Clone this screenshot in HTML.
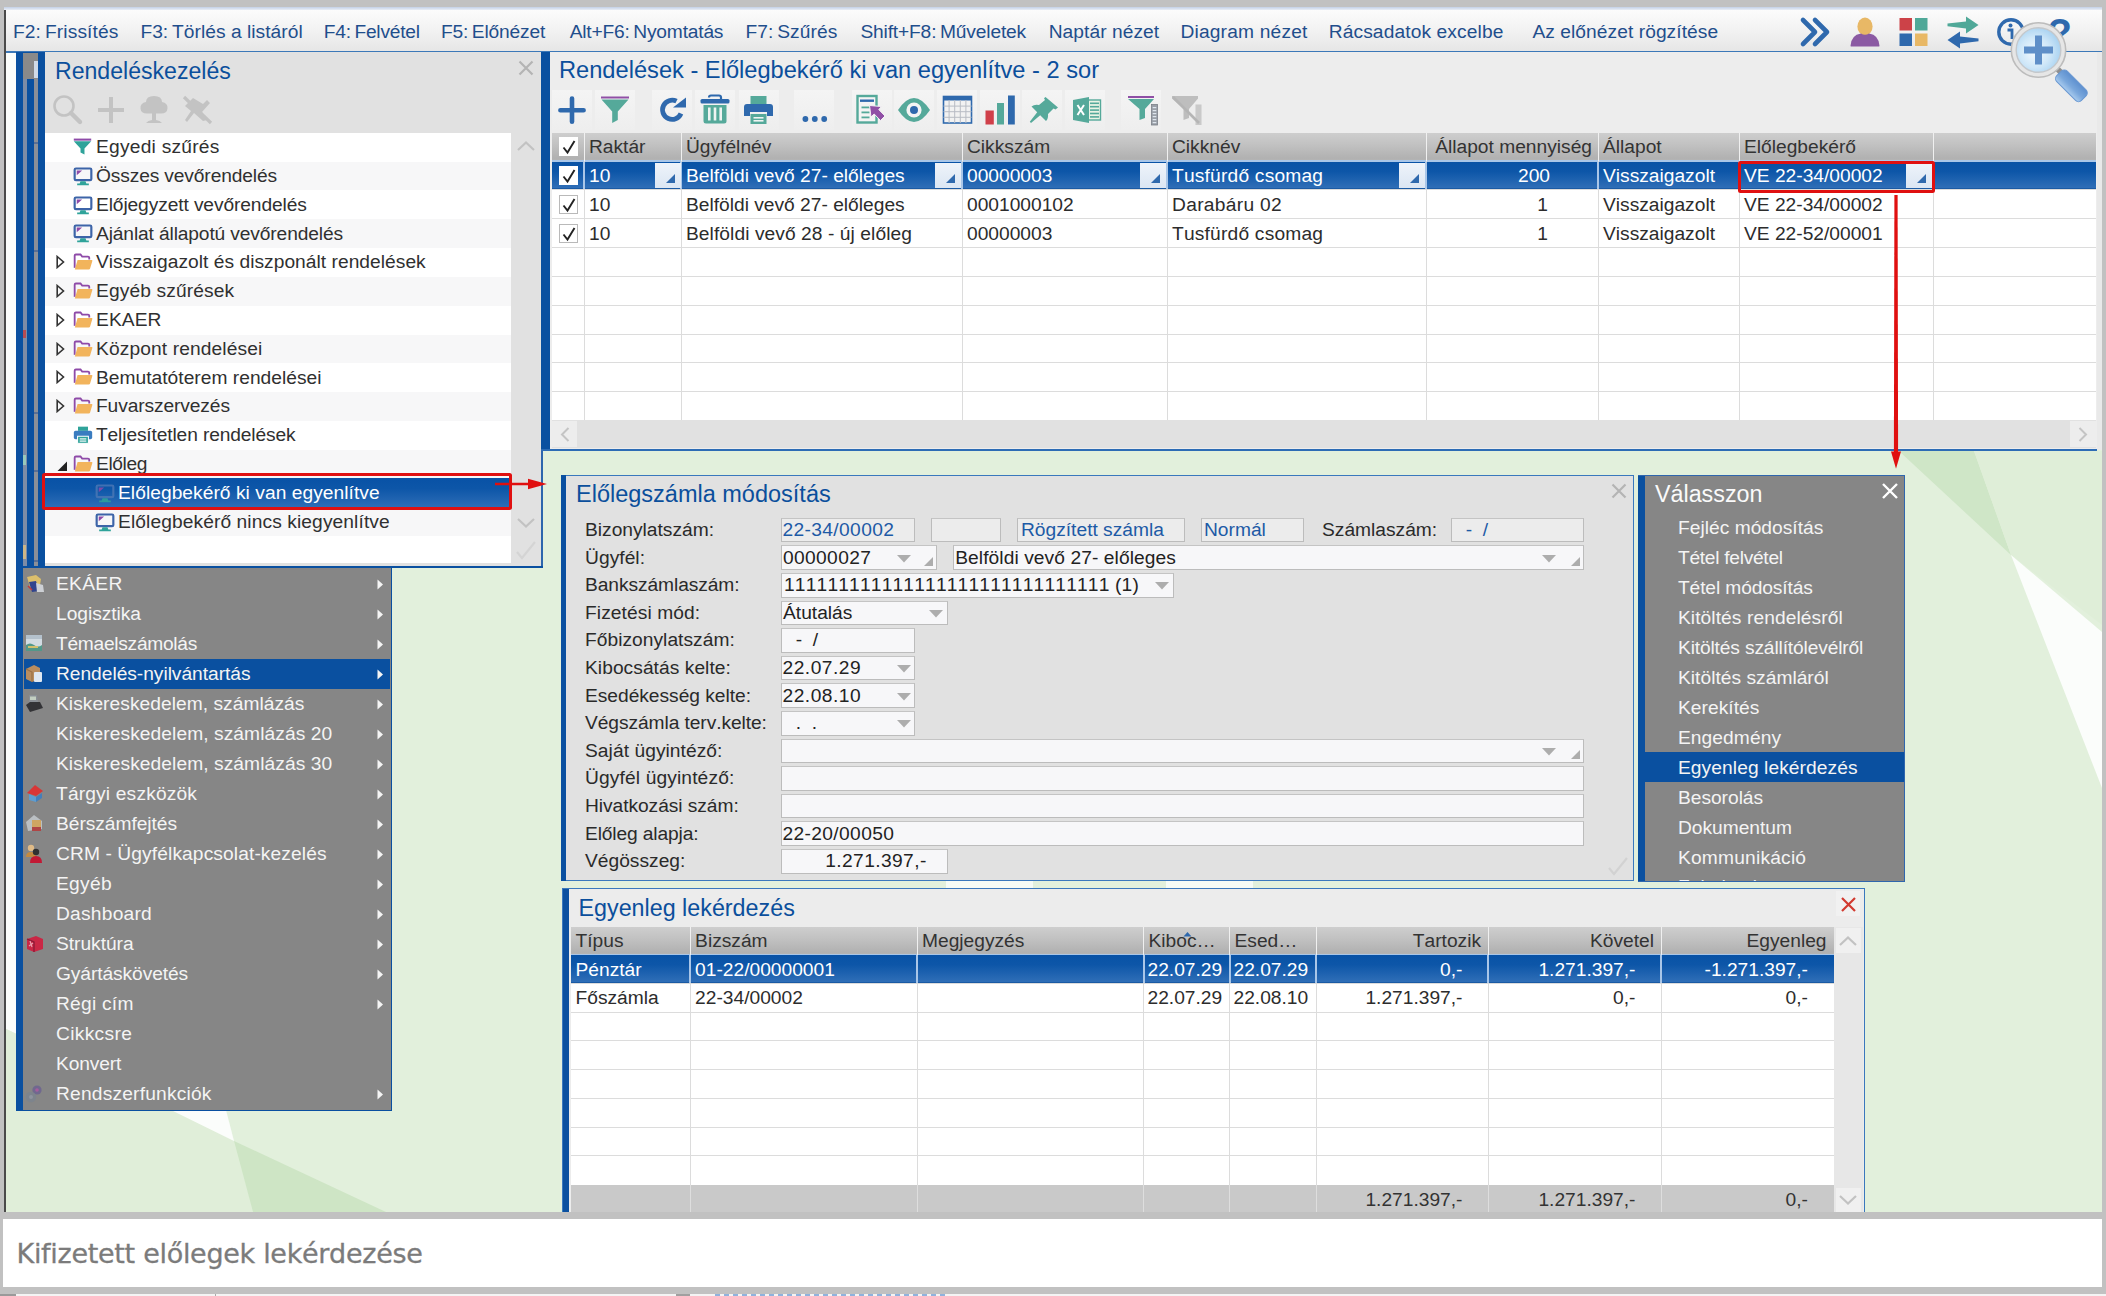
<!DOCTYPE html><html lang="hu"><head><meta charset="utf-8"><title>Kifizetett előlegek lekérdezése</title><style>
html,body{margin:0;padding:0}
body{font-kerning:none;font-variant-ligatures:none;width:2106px;height:1296px;position:relative;overflow:hidden;background:#c1c1c1;font-family:"Liberation Sans",Arial,sans-serif;}
div,svg{position:absolute;box-sizing:border-box}
.t{white-space:nowrap;overflow:visible}
.clip{overflow:hidden}
</style></head><body>
<div class="clip" style="left:4px;top:7px;width:2098px;height:1205px;background:#e2f0dc">
<div style="left:-4px;top:-7px;width:2106px;height:1296px">
<svg style="left:0;top:0" width="2106" height="1296" viewBox="0 0 2106 1296"><polygon points="1899,451 1974,451 2011,555" fill="#cfe6c7"/><polygon points="1974,451 2102,451 2102,625 2011,555" fill="#dfeed8"/><polygon points="2011,555 2102,632 2102,788" fill="#fbfdfb"/><polygon points="4,52 17,52 17,1034 4,1028" fill="#fbfdfb"/><polygon points="4,1028 171,1110 234,1141 253,1212 4,1212" fill="#e0eed9"/><polygon points="171,1110 226,1110 234,1141" fill="#fbfdfb"/><polygon points="234,1141 253,1212 386,1212" fill="#cee5c5"/><rect x="946" y="880" width="87" height="10" fill="#f6fbf6"/><rect x="1166" y="880" width="87" height="10" fill="#f6fbf6"/></svg>
<div style="left:4px;top:7px;width:1.5px;height:1205px;background:#4a4a4a"></div>
<div style="left:4px;top:7px;width:2098px;height:3px;background:linear-gradient(#c3d0e6,#e9eef6)"></div>
<div style="left:5.5px;top:10px;width:2096.5px;height:41px;background:linear-gradient(#fcfcfc,#f1f1f1 55%,#e6e6e6)"></div>
<div style="left:5.5px;top:50.5px;width:2096.5px;height:2px;background:#3c78b8"></div>
<div class="t" style="left:13px;top:19.0px;height:25px;line-height:25px;font-size:19.2px;color:#1f4e8c;letter-spacing:0.108px;">F2: Frissítés</div>
<div class="t" style="left:140.4px;top:19.0px;height:25px;line-height:25px;font-size:19.2px;color:#1f4e8c;letter-spacing:0.030px;">F3: Törlés a listáról</div>
<div class="t" style="left:323.7px;top:19.0px;height:25px;line-height:25px;font-size:19.2px;color:#1f4e8c;letter-spacing:-0.218px;">F4: Felvétel</div>
<div class="t" style="left:441px;top:19.0px;height:25px;line-height:25px;font-size:19.2px;color:#1f4e8c;letter-spacing:-0.182px;">F5: Előnézet</div>
<div class="t" style="left:569.7px;top:19.0px;height:25px;line-height:25px;font-size:19.2px;color:#1f4e8c;letter-spacing:-0.194px;">Alt+F6: Nyomtatás</div>
<div class="t" style="left:745.4px;top:19.0px;height:25px;line-height:25px;font-size:19.2px;color:#1f4e8c;letter-spacing:0.067px;">F7: Szűrés</div>
<div class="t" style="left:860.4px;top:19.0px;height:25px;line-height:25px;font-size:19.2px;color:#1f4e8c;letter-spacing:-0.156px;">Shift+F8: Műveletek</div>
<div class="t" style="left:1048.7px;top:19.0px;height:25px;line-height:25px;font-size:19.2px;color:#1f4e8c;letter-spacing:0.055px;">Naptár nézet</div>
<div class="t" style="left:1180.4px;top:19.0px;height:25px;line-height:25px;font-size:19.2px;color:#1f4e8c;letter-spacing:0.183px;">Diagram nézet</div>
<div class="t" style="left:1328.7px;top:19.0px;height:25px;line-height:25px;font-size:19.2px;color:#1f4e8c;letter-spacing:0.112px;">Rácsadatok excelbe</div>
<div class="t" style="left:1532.4px;top:19.0px;height:25px;line-height:25px;font-size:19.2px;color:#1f4e8c;letter-spacing:0.060px;">Az előnézet rögzítése</div>
<svg style="left:1798px;top:16px;" width="34" height="32" viewBox="0 0 34 32"><path d="M5 4 L17 16 L5 28 M17 4 L29 16 L17 28" fill="none" stroke="#2f69ad" stroke-width="4.6" stroke-linecap="round" stroke-linejoin="round"/></svg>
<svg style="left:1848px;top:16px;" width="34" height="32" viewBox="0 0 34 32"><ellipse cx="17" cy="10.5" rx="7.6" ry="9" fill="#e8b866"/><path d="M2.5 30 Q3 19 13 17.5 Q17 20 21 17.5 Q31 19 31.5 30 Q31.5 30.5 30 30.5 H4 Q2.5 30.5 2.5 30 Z" fill="#8b5aa3"/></svg>
<svg style="left:1898px;top:16px;" width="32" height="32" viewBox="0 0 32 32"><rect x="1.5" y="2" width="12.5" height="12.5" fill="#cc4248"/><rect x="17" y="2" width="12.5" height="12.5" fill="#4fa898"/><rect x="1.5" y="17.5" width="12.5" height="12.5" fill="#2f69ad"/><rect x="17" y="17.5" width="12.5" height="12.5" fill="#e8b866"/></svg>
<svg style="left:1945px;top:15px;" width="36" height="34" viewBox="0 0 36 34"><path d="M2.5 8.6 L21 6.4 V1.5 L33.5 10 L21 18.5 V13.6 L2.5 11.2 Z" fill="#4fa898"/><path d="M33.5 23.4 L15 21.4 V16.5 L2.5 25 L15 33.5 V28.6 L33.5 26.2 Z" fill="#2f69ad"/></svg>
<svg style="left:1995px;top:16px;" width="32" height="32" viewBox="0 0 32 32"><circle cx="16" cy="16" r="12.2" fill="none" stroke="#2f69ad" stroke-width="3.4"/><circle cx="15.5" cy="9.5" r="2" fill="#2f69ad"/><path d="M12.5 14 H17 V23" fill="none" stroke="#2f69ad" stroke-width="2.8"/></svg>
<div class="t" style="left:2047.5px;top:12.0px;height:42px;line-height:42px;font-size:40px;color:#2f69ad;font-weight:bold;">?</div>
<div style="left:16px;top:52px;width:526.5px;height:516px;background:#e1e1e1"></div>
<div style="left:16px;top:52px;width:29px;height:516px;background:#0a50a0"></div>
<div style="left:23px;top:53px;width:15px;height:26px;background:#8a8a8a"></div>
<div style="left:34px;top:61px;width:4px;height:17px;background:#d0dbe8"></div>
<div style="left:23.2px;top:79px;width:3.8px;height:487px;background:#7d8ca6"></div>
<div style="left:33.5px;top:79px;width:4.3px;height:487px;background:#8a8f98"></div>
<div style="left:33.5px;top:142px;width:4.3px;height:2px;background:#5a6f94"></div>
<div style="left:33.5px;top:250px;width:4.3px;height:2px;background:#5a6f94"></div>
<div style="left:33.5px;top:412px;width:4.3px;height:2px;background:#5a6f94"></div>
<div style="left:33.5px;top:470px;width:4.3px;height:2px;background:#5a6f94"></div>
<div style="left:33.5px;top:560px;width:4.3px;height:2px;background:#5a6f94"></div>
<div style="left:22.5px;top:330px;width:3px;height:8px;background:#d03030;opacity:.7"></div>
<div style="left:22.5px;top:455px;width:3px;height:10px;background:#9fd8c0;opacity:.8"></div>
<div style="left:22.5px;top:545px;width:3px;height:14px;background:#e0c080;opacity:.8"></div>
<div style="left:44px;top:565.6px;width:498.5px;height:2.4px;background:#0a50a0"></div>
<div style="left:541.2px;top:450px;width:1.5px;height:116px;background:#2d66ad"></div>
<div class="t" style="left:55px;top:55.599999999999994px;height:30px;line-height:30px;font-size:23.1px;color:#0b4f9c;">Rendeléskezelés</div>
<svg style="left:517px;top:59px;" width="18" height="18" viewBox="0 0 18 18"><path d="M2.5 2.5 L15.5 15.5 M15.5 2.5 L2.5 15.5" stroke="#b4b4b4" stroke-width="2.2" fill="none"/></svg>
<svg style="left:52px;top:94px;" width="32" height="32" viewBox="0 0 32 32"><circle cx="12" cy="12" r="9.5" fill="none" stroke="#c3c3c3" stroke-width="2.6"/><path d="M19 19 L28 28" stroke="#c3c3c3" stroke-width="4.4" stroke-linecap="round"/></svg>
<svg style="left:96px;top:95px;" width="30" height="30" viewBox="0 0 30 30"><path d="M15 2 V28 M2 15 H28" stroke="#c3c3c3" stroke-width="4"/></svg>
<svg style="left:138px;top:94px;" width="32" height="32" viewBox="0 0 32 32"><path d="M16 2 Q24 2 24 8 Q30 9 29.5 14.5 Q29 20 22 19.5 H10 Q3 20 2.5 14.5 Q2 9 8 8 Q8 2 16 2 Z" fill="#c3c3c3"/><path d="M14 19 H18 V26 Q22 26.5 24 29 H8 Q10 26.5 14 26 Z" fill="#c3c3c3"/></svg>
<svg style="left:181px;top:94px;" width="34" height="32" viewBox="0 0 34 32"><path d="M3 3 L30 29" stroke="#c3c3c3" stroke-width="3.2"/><path d="M12 4 L22 10 L26 6 L29 9 L21 18 L26 26 L22 27 L13 19 L6 28 L4 26 L10 17 L4 12 Z" fill="#c3c3c3"/></svg>
<div style="left:45px;top:133px;width:466px;height:430.3px;background:#fff"></div>
<svg style="left:73px;top:137.41px;" width="19" height="19" viewBox="0 0 24 24"><rect x="1" y="2" width="22" height="2.6" fill="#8e4aa8"/><path d="M1 5.5 H23 L14.5 14.5 V22 L9.5 19.5 V14.5 Z" fill="#2fa39a"/></svg>
<div class="t" style="left:96px;top:134.10999999999999px;height:25px;line-height:25px;font-size:19.2px;color:#303030;letter-spacing:0.233px;">Egyedi szűrés</div>
<div style="left:45px;top:161.62px;width:466px;height:28.82px;background:#f7f7f8"></div>
<svg style="left:73px;top:165.73px;" width="20" height="20" viewBox="0 0 24 24"><rect x="2" y="3" width="20" height="14" rx="1.5" fill="none" stroke="#3d64a8" stroke-width="2.6"/><path d="M4.5 5.5 H11 L4.5 11 Z" fill="#8e4aa8"/><path d="M9 18.3 H15 L16 21 H19 V23 H5 V21 H8 Z" fill="#2fa39a"/></svg>
<div class="t" style="left:96px;top:162.92999999999998px;height:25px;line-height:25px;font-size:19.2px;color:#303030;letter-spacing:-0.133px;">Összes vevőrendelés</div>
<svg style="left:73px;top:194.54999999999998px;" width="20" height="20" viewBox="0 0 24 24"><rect x="2" y="3" width="20" height="14" rx="1.5" fill="none" stroke="#3d64a8" stroke-width="2.6"/><path d="M4.5 5.5 H11 L4.5 11 Z" fill="#8e4aa8"/><path d="M9 18.3 H15 L16 21 H19 V23 H5 V21 H8 Z" fill="#2fa39a"/></svg>
<div class="t" style="left:96px;top:191.74999999999997px;height:25px;line-height:25px;font-size:19.2px;color:#303030;letter-spacing:-0.109px;">Előjegyzett vevőrendelés</div>
<div style="left:45px;top:219.26000000000002px;width:466px;height:28.82px;background:#f7f7f8"></div>
<svg style="left:73px;top:223.37px;" width="20" height="20" viewBox="0 0 24 24"><rect x="2" y="3" width="20" height="14" rx="1.5" fill="none" stroke="#3d64a8" stroke-width="2.6"/><path d="M4.5 5.5 H11 L4.5 11 Z" fill="#8e4aa8"/><path d="M9 18.3 H15 L16 21 H19 V23 H5 V21 H8 Z" fill="#2fa39a"/></svg>
<div class="t" style="left:96px;top:220.57px;height:25px;line-height:25px;font-size:19.2px;color:#303030;letter-spacing:-0.129px;">Ajánlat állapotú vevőrendelés</div>
<svg style="left:73px;top:252.19px;" width="20" height="20" viewBox="0 0 24 24"><path d="M2 6 V4.5 Q2 3 3.5 3 H9 L11 5.5 H18 Q19.5 5.5 19.5 7 V9" fill="none" stroke="#8e4aa8" stroke-width="2.2"/><path d="M2 6 V19" stroke="#8e4aa8" stroke-width="2.2"/><path d="M5.5 9.5 H22.5 Q23.6 9.5 23.2 10.8 L20.6 19.6 Q20.2 21 18.8 21 H2.2 Z" fill="#f2b45c"/></svg>
<svg style="left:56px;top:255.19px;" width="9" height="14" viewBox="0 0 9 14"><path d="M1.2 1.5 L7.5 7 L1.2 12.5 Z" fill="none" stroke="#333" stroke-width="1.6"/></svg>
<div class="t" style="left:96px;top:249.39px;height:25px;line-height:25px;font-size:19.2px;color:#303030;letter-spacing:0.032px;">Visszaigazolt és diszponált rendelések</div>
<div style="left:45px;top:276.9px;width:466px;height:28.82px;background:#f7f7f8"></div>
<svg style="left:73px;top:281.01px;" width="20" height="20" viewBox="0 0 24 24"><path d="M2 6 V4.5 Q2 3 3.5 3 H9 L11 5.5 H18 Q19.5 5.5 19.5 7 V9" fill="none" stroke="#8e4aa8" stroke-width="2.2"/><path d="M2 6 V19" stroke="#8e4aa8" stroke-width="2.2"/><path d="M5.5 9.5 H22.5 Q23.6 9.5 23.2 10.8 L20.6 19.6 Q20.2 21 18.8 21 H2.2 Z" fill="#f2b45c"/></svg>
<svg style="left:56px;top:284.01px;" width="9" height="14" viewBox="0 0 9 14"><path d="M1.2 1.5 L7.5 7 L1.2 12.5 Z" fill="none" stroke="#333" stroke-width="1.6"/></svg>
<div class="t" style="left:96px;top:278.21px;height:25px;line-height:25px;font-size:19.2px;color:#303030;letter-spacing:0.131px;">Egyéb szűrések</div>
<svg style="left:73px;top:309.83000000000004px;" width="20" height="20" viewBox="0 0 24 24"><path d="M2 6 V4.5 Q2 3 3.5 3 H9 L11 5.5 H18 Q19.5 5.5 19.5 7 V9" fill="none" stroke="#8e4aa8" stroke-width="2.2"/><path d="M2 6 V19" stroke="#8e4aa8" stroke-width="2.2"/><path d="M5.5 9.5 H22.5 Q23.6 9.5 23.2 10.8 L20.6 19.6 Q20.2 21 18.8 21 H2.2 Z" fill="#f2b45c"/></svg>
<svg style="left:56px;top:312.83000000000004px;" width="9" height="14" viewBox="0 0 9 14"><path d="M1.2 1.5 L7.5 7 L1.2 12.5 Z" fill="none" stroke="#333" stroke-width="1.6"/></svg>
<div class="t" style="left:96px;top:307.03000000000003px;height:25px;line-height:25px;font-size:19.2px;color:#303030;letter-spacing:0.100px;">EKAER</div>
<div style="left:45px;top:334.54px;width:466px;height:28.82px;background:#f7f7f8"></div>
<svg style="left:73px;top:338.65000000000003px;" width="20" height="20" viewBox="0 0 24 24"><path d="M2 6 V4.5 Q2 3 3.5 3 H9 L11 5.5 H18 Q19.5 5.5 19.5 7 V9" fill="none" stroke="#8e4aa8" stroke-width="2.2"/><path d="M2 6 V19" stroke="#8e4aa8" stroke-width="2.2"/><path d="M5.5 9.5 H22.5 Q23.6 9.5 23.2 10.8 L20.6 19.6 Q20.2 21 18.8 21 H2.2 Z" fill="#f2b45c"/></svg>
<svg style="left:56px;top:341.65000000000003px;" width="9" height="14" viewBox="0 0 9 14"><path d="M1.2 1.5 L7.5 7 L1.2 12.5 Z" fill="none" stroke="#333" stroke-width="1.6"/></svg>
<div class="t" style="left:96px;top:335.85px;height:25px;line-height:25px;font-size:19.2px;color:#303030;letter-spacing:0.112px;">Központ rendelései</div>
<svg style="left:73px;top:367.47px;" width="20" height="20" viewBox="0 0 24 24"><path d="M2 6 V4.5 Q2 3 3.5 3 H9 L11 5.5 H18 Q19.5 5.5 19.5 7 V9" fill="none" stroke="#8e4aa8" stroke-width="2.2"/><path d="M2 6 V19" stroke="#8e4aa8" stroke-width="2.2"/><path d="M5.5 9.5 H22.5 Q23.6 9.5 23.2 10.8 L20.6 19.6 Q20.2 21 18.8 21 H2.2 Z" fill="#f2b45c"/></svg>
<svg style="left:56px;top:370.47px;" width="9" height="14" viewBox="0 0 9 14"><path d="M1.2 1.5 L7.5 7 L1.2 12.5 Z" fill="none" stroke="#333" stroke-width="1.6"/></svg>
<div class="t" style="left:96px;top:364.67px;height:25px;line-height:25px;font-size:19.2px;color:#303030;letter-spacing:0.022px;">Bemutatóterem rendelései</div>
<div style="left:45px;top:392.18px;width:466px;height:28.82px;background:#f7f7f8"></div>
<svg style="left:73px;top:396.29px;" width="20" height="20" viewBox="0 0 24 24"><path d="M2 6 V4.5 Q2 3 3.5 3 H9 L11 5.5 H18 Q19.5 5.5 19.5 7 V9" fill="none" stroke="#8e4aa8" stroke-width="2.2"/><path d="M2 6 V19" stroke="#8e4aa8" stroke-width="2.2"/><path d="M5.5 9.5 H22.5 Q23.6 9.5 23.2 10.8 L20.6 19.6 Q20.2 21 18.8 21 H2.2 Z" fill="#f2b45c"/></svg>
<svg style="left:56px;top:399.29px;" width="9" height="14" viewBox="0 0 9 14"><path d="M1.2 1.5 L7.5 7 L1.2 12.5 Z" fill="none" stroke="#333" stroke-width="1.6"/></svg>
<div class="t" style="left:96px;top:393.49px;height:25px;line-height:25px;font-size:19.2px;color:#303030;letter-spacing:-0.108px;">Fuvarszervezés</div>
<svg style="left:73px;top:425.11px;" width="20" height="20" viewBox="0 0 24 24"><rect x="6" y="2" width="12" height="5" fill="#2fa39a"/><rect x="1" y="7" width="22" height="10" rx="2" fill="#3a7cc0"/><rect x="5.5" y="13.5" width="13" height="8.5" fill="#2fa39a" stroke="#fff" stroke-width="1.2"/><rect x="8" y="16" width="8" height="1.4" fill="#fff"/><rect x="8" y="18.6" width="8" height="1.4" fill="#fff"/></svg>
<div class="t" style="left:96px;top:422.31px;height:25px;line-height:25px;font-size:19.2px;color:#303030;letter-spacing:-0.135px;">Teljesítetlen rendelések</div>
<div style="left:45px;top:449.82px;width:466px;height:28.82px;background:#f7f7f8"></div>
<svg style="left:73px;top:453.93px;" width="20" height="20" viewBox="0 0 24 24"><path d="M2 6 V4.5 Q2 3 3.5 3 H9 L11 5.5 H18 Q19.5 5.5 19.5 7 V9" fill="none" stroke="#8e4aa8" stroke-width="2.2"/><path d="M2 6 V19" stroke="#8e4aa8" stroke-width="2.2"/><path d="M5.5 9.5 H22.5 Q23.6 9.5 23.2 10.8 L20.6 19.6 Q20.2 21 18.8 21 H2.2 Z" fill="#f2b45c"/></svg>
<svg style="left:57px;top:460.93px;" width="11" height="11" viewBox="0 0 11 11"><path d="M10 0.5 V10 H0.5 Z" fill="#222"/></svg>
<div class="t" style="left:96px;top:451.13px;height:25px;line-height:25px;font-size:19.2px;color:#303030;letter-spacing:-0.400px;">Előleg</div>
<div style="left:45px;top:478.14000000000004px;width:466px;height:29.82px;background:linear-gradient(#0852a6,#0d56a8 35%,#2f6eb7)"></div>
<svg style="left:95px;top:482.75000000000006px;opacity:.85" width="20" height="20" viewBox="0 0 24 24"><rect x="2" y="3" width="20" height="14" rx="1.5" fill="none" stroke="#4a77b5" stroke-width="2.6"/><path d="M4.5 5.5 H11 L4.5 11 Z" fill="#8e4aa8"/><path d="M9 18.3 H15 L16 21 H19 V23 H5 V21 H8 Z" fill="#2fa39a"/></svg>
<div class="t" style="left:118px;top:479.95000000000005px;height:25px;line-height:25px;font-size:19.2px;color:#fff;letter-spacing:0.048px;">Előlegbekérő ki van egyenlítve</div>
<div style="left:45px;top:507.46000000000004px;width:466px;height:28.82px;background:#f7f7f8"></div>
<svg style="left:95px;top:511.57000000000005px;" width="20" height="20" viewBox="0 0 24 24"><rect x="2" y="3" width="20" height="14" rx="1.5" fill="none" stroke="#3d64a8" stroke-width="2.6"/><path d="M4.5 5.5 H11 L4.5 11 Z" fill="#8e4aa8"/><path d="M9 18.3 H15 L16 21 H19 V23 H5 V21 H8 Z" fill="#2fa39a"/></svg>
<div class="t" style="left:118px;top:508.7700000000001px;height:25px;line-height:25px;font-size:19.2px;color:#303030;letter-spacing:0.097px;">Előlegbekérő nincs kiegyenlítve</div>
<svg style="left:516px;top:139.5px;" width="20" height="12" viewBox="0 0 20 12"><path d="M2 10 L10 2.5 L18 10" fill="none" stroke="#c2c2c2" stroke-width="2.2"/></svg>
<svg style="left:516px;top:517px;" width="20" height="12" viewBox="0 0 20 12"><path d="M2 2 L10 9.5 L18 2" fill="none" stroke="#c2c2c2" stroke-width="2.2"/></svg>
<svg style="left:515px;top:540px;" width="22" height="20" viewBox="0 0 22 20"><path d="M2 12 L7 18 L20 2" fill="none" stroke="#d4d4d4" stroke-width="2.2"/></svg>
<div style="left:541px;top:52px;width:8.6px;height:398px;background:#0a50a0"></div>
<div style="left:550px;top:52px;width:1552px;height:398px;background:#ededed"></div>
<div style="left:541px;top:448.8px;width:1556px;height:2px;background:#2d6cb5"></div>
<div style="left:2097px;top:52px;width:5px;height:398px;background:#e9e9e9"></div>
<div class="t" style="left:559px;top:55.099999999999994px;height:31px;line-height:31px;font-size:23.65px;color:#0b4f9c;">Rendelések - Előlegbekérő ki van egyenlítve - 2 sor</div>
<div style="left:552px;top:90px;width:40px;height:40px;background:linear-gradient(#f4f4f4,#eeeeee);"></div>
<div style="left:595px;top:90px;width:40px;height:40px;background:linear-gradient(#f4f4f4,#eeeeee);"></div>
<div style="left:652px;top:90px;width:40px;height:40px;background:linear-gradient(#f4f4f4,#eeeeee);"></div>
<div style="left:695px;top:90px;width:40px;height:40px;background:linear-gradient(#f4f4f4,#eeeeee);"></div>
<div style="left:738.5px;top:90px;width:40px;height:40px;background:linear-gradient(#f4f4f4,#eeeeee);"></div>
<div style="left:794px;top:90px;width:40px;height:40px;background:linear-gradient(#f4f4f4,#eeeeee);"></div>
<div style="left:851.5px;top:90px;width:40px;height:40px;background:linear-gradient(#f4f4f4,#eeeeee);"></div>
<div style="left:894px;top:90px;width:40px;height:40px;background:linear-gradient(#f4f4f4,#eeeeee);"></div>
<div style="left:936.5px;top:90px;width:40px;height:40px;background:linear-gradient(#f4f4f4,#eeeeee);"></div>
<div style="left:979.5px;top:90px;width:40px;height:40px;background:linear-gradient(#f4f4f4,#eeeeee);"></div>
<div style="left:1022px;top:90px;width:40px;height:40px;background:linear-gradient(#f4f4f4,#eeeeee);"></div>
<div style="left:1065px;top:90px;width:40px;height:40px;background:linear-gradient(#f4f4f4,#eeeeee);"></div>
<div style="left:1121px;top:90px;width:40px;height:40px;background:linear-gradient(#f4f4f4,#eeeeee);"></div>
<svg style="left:557px;top:95px;" width="30" height="30" viewBox="0 0 30 30"><path d="M15 3.6 V26.8 M3.4 15.2 H26.6" stroke="#2f69ad" stroke-width="4.6" stroke-linecap="round"/></svg>
<svg style="left:600px;top:95px;" width="30" height="30" viewBox="0 0 30 30"><rect x="1" y="1.5" width="28" height="2" fill="#9050a6"/><path d="M1.5 4.5 H28.5 L17.8 16.5 V25 L12.2 28 V16.5 Z" fill="#55a99a"/></svg>
<svg style="left:658px;top:96px;" width="30" height="28" viewBox="0 0 30 28"><path d="M18.5 5.2 A9.6 9.6 0 1 0 23 17.5" fill="none" stroke="#2f69ad" stroke-width="4.8"/><path d="M15 11.5 H28 V1.5 Z" fill="#2f69ad"/></svg>
<svg style="left:699px;top:94px;" width="32" height="31" viewBox="0 0 32 31"><path d="M10 3.5 Q10 1.5 12 1.5 H20 Q22 1.5 22 3.5 V6" fill="none" stroke="#2f69ad" stroke-width="2.2"/><rect x="1.5" y="5" width="29" height="4.6" rx="1.6" fill="#2f69ad"/><path d="M4.5 11 H27.5 V27 Q27.5 29.5 25 29.5 H7 Q4.5 29.5 4.5 27 Z" fill="#55a99a"/><rect x="9" y="13.5" width="2.6" height="13" fill="#eef4f2"/><rect x="14.7" y="13.5" width="2.6" height="13" fill="#eef4f2"/><rect x="20.4" y="13.5" width="2.6" height="13" fill="#eef4f2"/></svg>
<svg style="left:743px;top:95px;" width="31" height="30" viewBox="0 0 31 30"><rect x="7.5" y="1" width="16" height="8" fill="#55a99a"/><path d="M1 12 Q1 9 4 9 H27 Q30 9 30 12 V21 H24 V17 H7 V21 H1 Z" fill="#2f69ad"/><rect x="7.5" y="19" width="16" height="10" fill="#55a99a"/><rect x="10.5" y="22" width="10" height="1.6" fill="#eef4f2"/><rect x="10.5" y="25" width="10" height="1.6" fill="#eef4f2"/></svg>
<svg style="left:802px;top:115px;" width="26" height="8" viewBox="0 0 26 8"><circle cx="3.4" cy="4" r="2.9" fill="#2f69ad"/><circle cx="12.8" cy="4" r="2.9" fill="#2f69ad"/><circle cx="22.2" cy="4" r="2.9" fill="#2f69ad"/></svg>
<svg style="left:856px;top:94px;" width="31" height="31" viewBox="0 0 31 31"><rect x="1.5" y="2" width="19" height="26.5" fill="#f4f4f4" stroke="#55a99a" stroke-width="2.4"/><rect x="4" y="5.5" width="14" height="2.4" fill="#2f69ad"/><rect x="5.5" y="12.5" width="11" height="1.8" fill="#55a99a"/><rect x="5.5" y="17.5" width="8" height="1.8" fill="#55a99a"/><rect x="5.5" y="22.5" width="8" height="1.8" fill="#55a99a"/><path d="M13.5 11.5 L25.5 12.5 L22.8 15.6 L29 22 L24.5 26.5 L18.2 20 L15 23 Z" fill="#9050a6" stroke="#f4f4f4" stroke-width="1"/></svg>
<svg style="left:897px;top:97px;" width="34" height="26" viewBox="0 0 34 26"><path d="M1 13 Q17 -11 33 13 Q17 37 1 13 Z" fill="#55a99a"/><circle cx="17" cy="13" r="7.6" fill="#f4f4f4"/><circle cx="17" cy="13" r="4" fill="#2f69ad"/></svg>
<svg style="left:942px;top:95px;" width="31" height="30" viewBox="0 0 31 30"><rect x="1.5" y="1.5" width="28" height="26.5" fill="#f2f2f2" stroke="#2f69ad" stroke-width="1.6"/><rect x="1.5" y="1.5" width="28" height="4" fill="#2f69ad"/><path d="M7.1 5 V28" stroke="#b8bcc4" stroke-width="1"/><path d="M12.7 5 V28" stroke="#b8bcc4" stroke-width="1"/><path d="M18.299999999999997 5 V28" stroke="#b8bcc4" stroke-width="1"/><path d="M23.9 5 V28" stroke="#b8bcc4" stroke-width="1"/><path d="M1.5 11.1 H29.5" stroke="#b8bcc4" stroke-width="1"/><path d="M1.5 16.7 H29.5" stroke="#b8bcc4" stroke-width="1"/><path d="M1.5 22.299999999999997 H29.5" stroke="#b8bcc4" stroke-width="1"/></svg>
<svg style="left:984px;top:94px;" width="32" height="32" viewBox="0 0 32 32"><rect x="1.5" y="16.5" width="8.3" height="14" fill="#d0404a"/><rect x="13" y="9" width="7" height="21.5" fill="#55a99a"/><rect x="24" y="1.5" width="6.8" height="29" fill="#2f69ad"/></svg>
<svg style="left:1028px;top:96px;" width="31" height="28" viewBox="0 0 31 28"><path d="M17.5 1 L30 11.5 L27.5 13.5 L25.5 12.5 L20 18 Q20.5 22.5 18 25 L12.2 19.2 L3 27 L1.8 25.8 L9.2 16.2 L3.5 10.5 Q6.5 8 11 9 L17 4 L16 2.2 Z" fill="#55a99a"/></svg>
<svg style="left:1072px;top:96px;" width="30" height="28" viewBox="0 0 30 28"><rect x="14" y="4" width="14.5" height="20" fill="#eaf3e4" stroke="#55a99a" stroke-width="1.4"/><rect x="18" y="6.5" width="9" height="1.6" fill="#55a99a"/><rect x="18" y="9.9" width="9" height="1.6" fill="#55a99a"/><rect x="18" y="13.3" width="9" height="1.6" fill="#55a99a"/><rect x="18" y="16.7" width="9" height="1.6" fill="#55a99a"/><rect x="18" y="20.1" width="9" height="1.6" fill="#55a99a"/><path d="M1 4 L17 1 V27 L1 24 Z" fill="#55a99a"/><path d="M5.5 9 L12 19 M12 9 L5.5 19" stroke="#fff" stroke-width="2" fill="none"/></svg>
<svg style="left:1126px;top:94px;" width="34" height="32" viewBox="0 0 34 32"><rect x="2" y="2" width="26" height="2" fill="#9050a6"/><path d="M2 5 H28 L19 15 V24 L13.5 26 V15 Z" fill="#55a99a"/><rect x="25.5" y="10.5" width="6" height="20.5" fill="#9aa0a8" stroke="#7a7f88" stroke-width="0.8"/><rect x="26.7" y="13" width="3.6" height="1.2" fill="#dfe6ee"/><rect x="26.7" y="16" width="3.6" height="1.2" fill="#dfe6ee"/><rect x="26.7" y="19" width="3.6" height="1.2" fill="#dfe6ee"/><rect x="26.7" y="22" width="3.6" height="1.2" fill="#dfe6ee"/><rect x="26.7" y="25" width="3.6" height="1.2" fill="#dfe6ee"/><rect x="26.7" y="28" width="3.6" height="1.2" fill="#dfe6ee"/></svg>
<svg style="left:1170px;top:94px;opacity:.9" width="34" height="32" viewBox="0 0 34 32"><path d="M2 2 H28 V4.5 L19 15 V24 L13.5 26 V15 L2 4.5 Z" fill="#b9b9b9"/><rect x="25.5" y="10.5" width="6" height="20.5" fill="#c6c6c6"/><path d="M3 3 L29 29" stroke="#b0b0b0" stroke-width="2.6"/></svg>
<div style="left:552px;top:133px;width:1543.5px;height:28px;background:linear-gradient(#cecece,#c2c2c2 40%,#b1b1b1 90%,#b6b6b6)"></div>
<div style="left:552px;top:161px;width:1543.5px;height:259px;background:#fff"></div>
<div style="left:552px;top:189.35px;width:1543.5px;height:1px;background:#dcdcdc"></div>
<div style="left:552px;top:218.2px;width:1543.5px;height:1px;background:#dcdcdc"></div>
<div style="left:552px;top:247.05px;width:1543.5px;height:1px;background:#dcdcdc"></div>
<div style="left:552px;top:275.9px;width:1543.5px;height:1px;background:#dcdcdc"></div>
<div style="left:552px;top:304.75px;width:1543.5px;height:1px;background:#dcdcdc"></div>
<div style="left:552px;top:333.6px;width:1543.5px;height:1px;background:#dcdcdc"></div>
<div style="left:552px;top:362.45000000000005px;width:1543.5px;height:1px;background:#dcdcdc"></div>
<div style="left:552px;top:391.3px;width:1543.5px;height:1px;background:#dcdcdc"></div>
<div style="left:552px;top:160px;width:1543.5px;height:2px;background:#a9c6e8"></div>
<div style="left:552px;top:161.8px;width:1543.5px;height:27px;background:linear-gradient(#0852a6,#0d56a8 35%,#2f6eb7 96%,#0a4a94)"></div>
<div style="left:583.5px;top:133px;width:1px;height:28px;background:#f0f0f0"></div>
<div style="left:583.5px;top:161px;width:1px;height:259px;background:#dcdcdc"></div>
<div style="left:583.3px;top:161.8px;width:2px;height:27px;background:#a9c6e8"></div>
<div style="left:680.5px;top:133px;width:1px;height:28px;background:#f0f0f0"></div>
<div style="left:680.5px;top:161px;width:1px;height:259px;background:#dcdcdc"></div>
<div style="left:680.3px;top:161.8px;width:2px;height:27px;background:#a9c6e8"></div>
<div style="left:961.5px;top:133px;width:1px;height:28px;background:#f0f0f0"></div>
<div style="left:961.5px;top:161px;width:1px;height:259px;background:#dcdcdc"></div>
<div style="left:961.3px;top:161.8px;width:2px;height:27px;background:#a9c6e8"></div>
<div style="left:1166.5px;top:133px;width:1px;height:28px;background:#f0f0f0"></div>
<div style="left:1166.5px;top:161px;width:1px;height:259px;background:#dcdcdc"></div>
<div style="left:1166.3px;top:161.8px;width:2px;height:27px;background:#a9c6e8"></div>
<div style="left:1425.5px;top:133px;width:1px;height:28px;background:#f0f0f0"></div>
<div style="left:1425.5px;top:161px;width:1px;height:259px;background:#dcdcdc"></div>
<div style="left:1425.3px;top:161.8px;width:2px;height:27px;background:#a9c6e8"></div>
<div style="left:1597.5px;top:133px;width:1px;height:28px;background:#f0f0f0"></div>
<div style="left:1597.5px;top:161px;width:1px;height:259px;background:#dcdcdc"></div>
<div style="left:1597.3px;top:161.8px;width:2px;height:27px;background:#a9c6e8"></div>
<div style="left:1738.5px;top:133px;width:1px;height:28px;background:#f0f0f0"></div>
<div style="left:1738.5px;top:161px;width:1px;height:259px;background:#dcdcdc"></div>
<div style="left:1738.3px;top:161.8px;width:2px;height:27px;background:#a9c6e8"></div>
<div style="left:1932.5px;top:133px;width:1px;height:28px;background:#f0f0f0"></div>
<div style="left:1932.5px;top:161px;width:1px;height:259px;background:#dcdcdc"></div>
<div style="left:1932.3px;top:161.8px;width:2px;height:27px;background:#a9c6e8"></div>
<div class="t" style="left:589px;top:133.9px;height:25px;line-height:25px;font-size:19.2px;color:#333;">Raktár</div>
<div class="t" style="left:686px;top:133.9px;height:25px;line-height:25px;font-size:19.2px;color:#333;">Ügyfélnév</div>
<div class="t" style="left:967px;top:133.9px;height:25px;line-height:25px;font-size:19.2px;color:#333;">Cikkszám</div>
<div class="t" style="left:1172px;top:133.9px;height:25px;line-height:25px;font-size:19.2px;color:#333;">Cikknév</div>
<div class="t" style="left:1426px;top:133.9px;height:25px;line-height:25px;font-size:19.2px;color:#333;width:166px;text-align:right;">Állapot mennyiség</div>
<div class="t" style="left:1603px;top:133.9px;height:25px;line-height:25px;font-size:19.2px;color:#333;">Állapot</div>
<div class="t" style="left:1744px;top:133.9px;height:25px;line-height:25px;font-size:19.2px;color:#333;">Előlegbekérő</div>
<div style="left:558.5px;top:137.0px;width:19px;height:19px;background:#fff;border:1px solid #fff"></div>
<svg style="left:558.5px;top:137.0px;" width="19" height="19" viewBox="0 0 19 19"><path d="M4.5 10.5 L8.5 15.5 L15.5 4" fill="none" stroke="#222" stroke-width="1.9"/></svg>
<div style="left:558.5px;top:165.925px;width:19px;height:19px;background:#fff;border:1px solid #fff"></div>
<svg style="left:558.5px;top:165.925px;" width="19" height="19" viewBox="0 0 19 19"><path d="M4.5 10.5 L8.5 15.5 L15.5 4" fill="none" stroke="#222" stroke-width="1.9"/></svg>
<div class="t" style="left:589px;top:163.125px;height:25px;line-height:25px;font-size:19.2px;color:#fff;">10</div>
<div class="t" style="left:686px;top:163.125px;height:25px;line-height:25px;font-size:19.2px;color:#fff;">Belföldi vevő 27- előleges</div>
<div class="t" style="left:967px;top:163.125px;height:25px;line-height:25px;font-size:19.2px;color:#fff;">00000003</div>
<div class="t" style="left:1172px;top:163.125px;height:25px;line-height:25px;font-size:19.2px;color:#fff;letter-spacing:0.200px;">Tusfürdő csomag</div>
<div class="t" style="left:1426px;top:163.125px;height:25px;line-height:25px;font-size:19.2px;color:#fff;width:124px;text-align:right;">200</div>
<div class="t" style="left:1603px;top:163.125px;height:25px;line-height:25px;font-size:19.2px;color:#fff;">Visszaigazolt</div>
<div class="t" style="left:1744px;top:163.125px;height:25px;line-height:25px;font-size:19.2px;color:#fff;">VE 22-34/00002</div>
<div style="left:558.5px;top:194.775px;width:19px;height:19px;background:#fff;border:1px solid #b9b9b9"></div>
<svg style="left:558.5px;top:194.775px;" width="19" height="19" viewBox="0 0 19 19"><path d="M4.5 10.5 L8.5 15.5 L15.5 4" fill="none" stroke="#222" stroke-width="1.9"/></svg>
<div class="t" style="left:589px;top:191.975px;height:25px;line-height:25px;font-size:19.2px;color:#2c2c2c;">10</div>
<div class="t" style="left:686px;top:191.975px;height:25px;line-height:25px;font-size:19.2px;color:#2c2c2c;">Belföldi vevő 27- előleges</div>
<div class="t" style="left:967px;top:191.975px;height:25px;line-height:25px;font-size:19.2px;color:#2c2c2c;">0001000102</div>
<div class="t" style="left:1172px;top:191.975px;height:25px;line-height:25px;font-size:19.2px;color:#2c2c2c;letter-spacing:0.300px;">Darabáru 02</div>
<div class="t" style="left:1426px;top:191.975px;height:25px;line-height:25px;font-size:19.2px;color:#2c2c2c;width:122px;text-align:right;">1</div>
<div class="t" style="left:1603px;top:191.975px;height:25px;line-height:25px;font-size:19.2px;color:#2c2c2c;">Visszaigazolt</div>
<div class="t" style="left:1744px;top:191.975px;height:25px;line-height:25px;font-size:19.2px;color:#2c2c2c;">VE 22-34/00002</div>
<div style="left:558.5px;top:223.625px;width:19px;height:19px;background:#fff;border:1px solid #b9b9b9"></div>
<svg style="left:558.5px;top:223.625px;" width="19" height="19" viewBox="0 0 19 19"><path d="M4.5 10.5 L8.5 15.5 L15.5 4" fill="none" stroke="#222" stroke-width="1.9"/></svg>
<div class="t" style="left:589px;top:220.825px;height:25px;line-height:25px;font-size:19.2px;color:#2c2c2c;">10</div>
<div class="t" style="left:686px;top:220.825px;height:25px;line-height:25px;font-size:19.2px;color:#2c2c2c;letter-spacing:0.070px;">Belföldi vevő 28 - új előleg</div>
<div class="t" style="left:967px;top:220.825px;height:25px;line-height:25px;font-size:19.2px;color:#2c2c2c;">00000003</div>
<div class="t" style="left:1172px;top:220.825px;height:25px;line-height:25px;font-size:19.2px;color:#2c2c2c;letter-spacing:0.200px;">Tusfürdő csomag</div>
<div class="t" style="left:1426px;top:220.825px;height:25px;line-height:25px;font-size:19.2px;color:#2c2c2c;width:122px;text-align:right;">1</div>
<div class="t" style="left:1603px;top:220.825px;height:25px;line-height:25px;font-size:19.2px;color:#2c2c2c;">Visszaigazolt</div>
<div class="t" style="left:1744px;top:220.825px;height:25px;line-height:25px;font-size:19.2px;color:#2c2c2c;">VE 22-52/00001</div>
<div style="left:655px;top:163.22500000000002px;width:25.5px;height:24.6px;background:linear-gradient(#eef3fa,#dbe6f3)"></div>
<svg style="left:665px;top:173.425px;" width="11" height="11" viewBox="0 0 11 11"><path d="M10 1 V10 H1 Z" fill="#2f69ad"/></svg>
<div style="left:935px;top:163.22500000000002px;width:25.5px;height:24.6px;background:linear-gradient(#eef3fa,#dbe6f3)"></div>
<svg style="left:945px;top:173.425px;" width="11" height="11" viewBox="0 0 11 11"><path d="M10 1 V10 H1 Z" fill="#2f69ad"/></svg>
<div style="left:1140px;top:163.22500000000002px;width:25.5px;height:24.6px;background:linear-gradient(#eef3fa,#dbe6f3)"></div>
<svg style="left:1150px;top:173.425px;" width="11" height="11" viewBox="0 0 11 11"><path d="M10 1 V10 H1 Z" fill="#2f69ad"/></svg>
<div style="left:1399px;top:163.22500000000002px;width:25.5px;height:24.6px;background:linear-gradient(#eef3fa,#dbe6f3)"></div>
<svg style="left:1409px;top:173.425px;" width="11" height="11" viewBox="0 0 11 11"><path d="M10 1 V10 H1 Z" fill="#2f69ad"/></svg>
<div style="left:1906px;top:163.22500000000002px;width:25.5px;height:24.6px;background:linear-gradient(#eef3fa,#dbe6f3)"></div>
<svg style="left:1916px;top:173.425px;" width="11" height="11" viewBox="0 0 11 11"><path d="M10 1 V10 H1 Z" fill="#2f69ad"/></svg>
<div style="left:552px;top:420px;width:1543.5px;height:28px;background:#e1e1e1"></div>
<div style="left:552px;top:421px;width:25px;height:26px;background:#ededed"></div>
<div style="left:2070px;top:421px;width:25.5px;height:26px;background:#ededed"></div>
<svg style="left:559px;top:426px;" width="12" height="17" viewBox="0 0 12 17"><path d="M9.5 2 L3 8.5 L9.5 15" fill="none" stroke="#c4c4c4" stroke-width="2"/></svg>
<svg style="left:2077px;top:426px;" width="12" height="17" viewBox="0 0 12 17"><path d="M2.5 2 L9 8.5 L2.5 15" fill="none" stroke="#c4c4c4" stroke-width="2"/></svg>
<div style="left:16px;top:568px;width:375.5px;height:542.5px;background:#868686;border:1.5px solid #0a50a0;border-left:none;border-top:none"></div>
<div style="left:16px;top:566px;width:7.2px;height:544.5px;background:#0a50a0"></div>
<svg style="left:24px;top:573px;opacity:.92" width="21" height="21" viewBox="0 0 21 21"><path d="M3 4 L12 2 L17 6 L16 12 L6 14 Z" fill="#e4c46a"/><path d="M5 9 L12 8 L15 18 L8 19 Z" fill="#2a3f8f"/><path d="M12 10 L19 12 L20 19 L13 19 Z" fill="#d4d7dc"/><path d="M4 13 L8 17" stroke="#c33" stroke-width="1.5"/></svg>
<div class="t" style="left:56px;top:571.1px;height:25px;line-height:25px;font-size:19.2px;color:#f4f4f4;letter-spacing:0.325px;">EKÁER</div>
<svg style="left:377px;top:578.5px;" width="7" height="11" viewBox="0 0 7 11"><path d="M0.5 0.5 L6 5.5 L0.5 10.5 Z" fill="#f4f4f4"/></svg>
<div class="t" style="left:56px;top:601.1px;height:25px;line-height:25px;font-size:19.2px;color:#f4f4f4;letter-spacing:-0.033px;">Logisztika</div>
<svg style="left:377px;top:608.5px;" width="7" height="11" viewBox="0 0 7 11"><path d="M0.5 0.5 L6 5.5 L0.5 10.5 Z" fill="#f4f4f4"/></svg>
<svg style="left:24px;top:633px;opacity:.92" width="21" height="21" viewBox="0 0 21 21"><rect x="2" y="2" width="16" height="15" fill="#d9e3ea"/><rect x="2" y="2" width="16" height="4" fill="#b8c6d2"/><path d="M2 12 Q6 9 10 12 T18 12 V18 H2 Z" fill="#4f9a8a"/><rect x="4" y="13" width="10" height="2" fill="#d9c46a"/></svg>
<div class="t" style="left:56px;top:631.1px;height:25px;line-height:25px;font-size:19.2px;color:#f4f4f4;letter-spacing:-0.285px;">Témaelszámolás</div>
<svg style="left:377px;top:638.5px;" width="7" height="11" viewBox="0 0 7 11"><path d="M0.5 0.5 L6 5.5 L0.5 10.5 Z" fill="#f4f4f4"/></svg>
<div style="left:23.5px;top:659px;width:366.5px;height:30px;background:#0a50a0"></div>
<svg style="left:24px;top:663px;opacity:.92" width="21" height="21" viewBox="0 0 21 21"><path d="M2 6 L10 2 L16 5 V16 L8 19 L2 16 Z" fill="#c8935a"/><path d="M2 6 L8 9 V19" fill="none" stroke="#a8743e" stroke-width="1.2"/><rect x="10" y="9" width="8" height="10" rx="1" fill="#f2f5fa"/></svg>
<div class="t" style="left:56px;top:661.1px;height:25px;line-height:25px;font-size:19.2px;color:#f4f4f4;letter-spacing:-0.029px;">Rendelés-nyilvántartás</div>
<svg style="left:377px;top:668.5px;" width="7" height="11" viewBox="0 0 7 11"><path d="M0.5 0.5 L6 5.5 L0.5 10.5 Z" fill="#f4f4f4"/></svg>
<svg style="left:24px;top:693px;opacity:.92" width="21" height="21" viewBox="0 0 21 21"><path d="M5 2 H13 L14 9 H5 Z" fill="#8a8f96"/><path d="M6 3.5 H12 V7 H6 Z" fill="#c9d6c6"/><path d="M2 12 L6 9 H16 L19 15 L6 19 Z" fill="#2c2c30"/></svg>
<div class="t" style="left:56px;top:691.1px;height:25px;line-height:25px;font-size:19.2px;color:#f4f4f4;letter-spacing:0.040px;">Kiskereskedelem, számlázás</div>
<svg style="left:377px;top:698.5px;" width="7" height="11" viewBox="0 0 7 11"><path d="M0.5 0.5 L6 5.5 L0.5 10.5 Z" fill="#f4f4f4"/></svg>
<div class="t" style="left:56px;top:721.1px;height:25px;line-height:25px;font-size:19.2px;color:#f4f4f4;letter-spacing:0.075px;">Kiskereskedelem, számlázás 20</div>
<svg style="left:377px;top:728.5px;" width="7" height="11" viewBox="0 0 7 11"><path d="M0.5 0.5 L6 5.5 L0.5 10.5 Z" fill="#f4f4f4"/></svg>
<div class="t" style="left:56px;top:751.1px;height:25px;line-height:25px;font-size:19.2px;color:#f4f4f4;letter-spacing:0.075px;">Kiskereskedelem, számlázás 30</div>
<svg style="left:377px;top:758.5px;" width="7" height="11" viewBox="0 0 7 11"><path d="M0.5 0.5 L6 5.5 L0.5 10.5 Z" fill="#f4f4f4"/></svg>
<svg style="left:24px;top:783px;opacity:.92" width="21" height="21" viewBox="0 0 21 21"><path d="M3 10 L11 2 L19 8 L12 13 Z" fill="#e03030"/><path d="M5 11 L12 14 V19 L5 17 Z" fill="#5aa0d8"/><path d="M12 14 L18 10 V15 L12 19 Z" fill="#3f7fc0"/></svg>
<div class="t" style="left:56px;top:781.1px;height:25px;line-height:25px;font-size:19.2px;color:#f4f4f4;letter-spacing:0.164px;">Tárgyi eszközök</div>
<svg style="left:377px;top:788.5px;" width="7" height="11" viewBox="0 0 7 11"><path d="M0.5 0.5 L6 5.5 L0.5 10.5 Z" fill="#f4f4f4"/></svg>
<svg style="left:24px;top:813px;opacity:.92" width="21" height="21" viewBox="0 0 21 21"><path d="M2 9 L10 2 L18 8 V16 L4 18 Z" fill="#bfc4c9"/><rect x="8" y="7" width="9" height="8" fill="#d6a860"/><rect x="8" y="14" width="9" height="4" fill="#b34040"/></svg>
<div class="t" style="left:56px;top:811.1px;height:25px;line-height:25px;font-size:19.2px;color:#f4f4f4;letter-spacing:-0.042px;">Bérszámfejtés</div>
<svg style="left:377px;top:818.5px;" width="7" height="11" viewBox="0 0 7 11"><path d="M0.5 0.5 L6 5.5 L0.5 10.5 Z" fill="#f4f4f4"/></svg>
<svg style="left:24px;top:843px;opacity:.92" width="21" height="21" viewBox="0 0 21 21"><circle cx="7" cy="5" r="3.2" fill="#e8c088"/><path d="M2 14 Q2 9 7 9 Q12 9 12 14 Z" fill="#c98b3a"/><circle cx="12" cy="9" r="3.2" fill="#2a2a2a"/><path d="M6 20 Q6 13 12 13 Q18 13 18 20 Z" fill="#c8102e"/></svg>
<div class="t" style="left:56px;top:841.1px;height:25px;line-height:25px;font-size:19.2px;color:#f4f4f4;letter-spacing:0.104px;">CRM - Ügyfélkapcsolat-kezelés</div>
<svg style="left:377px;top:848.5px;" width="7" height="11" viewBox="0 0 7 11"><path d="M0.5 0.5 L6 5.5 L0.5 10.5 Z" fill="#f4f4f4"/></svg>
<div class="t" style="left:56px;top:871.1px;height:25px;line-height:25px;font-size:19.2px;color:#f4f4f4;letter-spacing:0.325px;">Egyéb</div>
<svg style="left:377px;top:878.5px;" width="7" height="11" viewBox="0 0 7 11"><path d="M0.5 0.5 L6 5.5 L0.5 10.5 Z" fill="#f4f4f4"/></svg>
<div class="t" style="left:56px;top:901.1px;height:25px;line-height:25px;font-size:19.2px;color:#f4f4f4;letter-spacing:0.237px;">Dashboard</div>
<svg style="left:377px;top:908.5px;" width="7" height="11" viewBox="0 0 7 11"><path d="M0.5 0.5 L6 5.5 L0.5 10.5 Z" fill="#f4f4f4"/></svg>
<svg style="left:24px;top:933px;opacity:.92" width="21" height="21" viewBox="0 0 21 21"><path d="M3 6 L12 3 L19 6 V16 L10 19 L3 16 Z" fill="#d02040"/><path d="M3 6 L10 9 V19" stroke="#8c1030" stroke-width="1.3" fill="none"/><path d="M6 8 L8 14 M5 13 L9 10" stroke="#f2a0b0" stroke-width="1.2"/></svg>
<div class="t" style="left:56px;top:931.1px;height:25px;line-height:25px;font-size:19.2px;color:#f4f4f4;letter-spacing:-0.025px;">Struktúra</div>
<svg style="left:377px;top:938.5px;" width="7" height="11" viewBox="0 0 7 11"><path d="M0.5 0.5 L6 5.5 L0.5 10.5 Z" fill="#f4f4f4"/></svg>
<div class="t" style="left:56px;top:961.1px;height:25px;line-height:25px;font-size:19.2px;color:#f4f4f4;letter-spacing:-0.085px;">Gyártáskövetés</div>
<svg style="left:377px;top:968.5px;" width="7" height="11" viewBox="0 0 7 11"><path d="M0.5 0.5 L6 5.5 L0.5 10.5 Z" fill="#f4f4f4"/></svg>
<div class="t" style="left:56px;top:991.1px;height:25px;line-height:25px;font-size:19.2px;color:#f4f4f4;letter-spacing:0.243px;">Régi cím</div>
<svg style="left:377px;top:998.5px;" width="7" height="11" viewBox="0 0 7 11"><path d="M0.5 0.5 L6 5.5 L0.5 10.5 Z" fill="#f4f4f4"/></svg>
<div class="t" style="left:56px;top:1021.0999999999999px;height:25px;line-height:25px;font-size:19.2px;color:#f4f4f4;letter-spacing:0.329px;">Cikkcsre</div>
<div class="t" style="left:56px;top:1051.1px;height:25px;line-height:25px;font-size:19.2px;color:#f4f4f4;letter-spacing:-0.117px;">Konvert</div>
<svg style="left:24px;top:1083px;opacity:.92" width="21" height="21" viewBox="0 0 21 21"><circle cx="13" cy="7" r="4.6" fill="#6f6690"/><circle cx="7" cy="14" r="5.2" fill="#7d848e"/><circle cx="13" cy="7" r="1.8" fill="#a85aa0"/><circle cx="7" cy="14" r="2" fill="#8f96a0"/></svg>
<div class="t" style="left:56px;top:1081.1px;height:25px;line-height:25px;font-size:19.2px;color:#f4f4f4;letter-spacing:0.193px;">Rendszerfunkciók</div>
<svg style="left:377px;top:1088.5px;" width="7" height="11" viewBox="0 0 7 11"><path d="M0.5 0.5 L6 5.5 L0.5 10.5 Z" fill="#f4f4f4"/></svg>
<div style="left:560.5px;top:474.7px;width:1073.5px;height:406.8px;background:#e1e1e1;border:1.5px solid #3a78bd"></div>
<div style="left:560.5px;top:474.7px;width:5.5px;height:406.8px;background:#0a50a0"></div>
<div class="t" style="left:576px;top:478.5px;height:31px;line-height:31px;font-size:23.5px;color:#0b4f9c;">Előlegszámla módosítás</div>
<svg style="left:1609.5px;top:482px;" width="18" height="18" viewBox="0 0 18 18"><path d="M2.5 2.5 L15.5 15.5 M15.5 2.5 L2.5 15.5" stroke="#b4b4b4" stroke-width="2.2" fill="none"/></svg>
<svg style="left:1607px;top:856px;" width="22" height="20" viewBox="0 0 22 20"><path d="M2 12 L7 18 L20 2" fill="none" stroke="#d2d2d2" stroke-width="2.2"/></svg>
<div class="t" style="left:585px;top:517.0px;height:25px;line-height:25px;font-size:19.2px;color:#2a2a2a;">Bizonylatszám:</div>
<div class="t" style="left:585px;top:544.6px;height:25px;line-height:25px;font-size:19.2px;color:#2a2a2a;letter-spacing:0.050px;">Ügyfél:</div>
<div class="t" style="left:585px;top:572.2px;height:25px;line-height:25px;font-size:19.2px;color:#2a2a2a;letter-spacing:-0.079px;">Bankszámlaszám:</div>
<div class="t" style="left:585px;top:599.8px;height:25px;line-height:25px;font-size:19.2px;color:#2a2a2a;letter-spacing:0.083px;">Fizetési mód:</div>
<div class="t" style="left:585px;top:627.4px;height:25px;line-height:25px;font-size:19.2px;color:#2a2a2a;letter-spacing:0.033px;">Főbizonylatszám:</div>
<div class="t" style="left:585px;top:655.0px;height:25px;line-height:25px;font-size:19.2px;color:#2a2a2a;letter-spacing:0.050px;">Kibocsátás kelte:</div>
<div class="t" style="left:585px;top:682.6px;height:25px;line-height:25px;font-size:19.2px;color:#2a2a2a;letter-spacing:-0.024px;">Esedékesség kelte:</div>
<div class="t" style="left:585px;top:710.2px;height:25px;line-height:25px;font-size:19.2px;color:#2a2a2a;letter-spacing:-0.075px;">Végszámla terv.kelte:</div>
<div class="t" style="left:585px;top:737.8px;height:25px;line-height:25px;font-size:19.2px;color:#2a2a2a;letter-spacing:0.060px;">Saját ügyintéző:</div>
<div class="t" style="left:585px;top:765.4px;height:25px;line-height:25px;font-size:19.2px;color:#2a2a2a;letter-spacing:0.131px;">Ügyfél ügyintéző:</div>
<div class="t" style="left:585px;top:793.0px;height:25px;line-height:25px;font-size:19.2px;color:#2a2a2a;letter-spacing:-0.056px;">Hivatkozási szám:</div>
<div class="t" style="left:585px;top:820.6px;height:25px;line-height:25px;font-size:19.2px;color:#2a2a2a;letter-spacing:-0.131px;">Előleg alapja:</div>
<div class="t" style="left:585px;top:848.2px;height:25px;line-height:25px;font-size:19.2px;color:#2a2a2a;letter-spacing:0.011px;">Végösszeg:</div>
<div style="left:781px;top:517.8px;width:134px;height:24.6px;background:#ececec;border:1.3px solid #bcbcbc;border-top-color:#c4c4c4"></div>
<div class="t" style="left:782.5px;top:517.0px;height:25px;line-height:25px;font-size:19.2px;color:#1d5aa6;letter-spacing:0.360px;">22-34/00002</div>
<div style="left:931px;top:517.8px;width:70px;height:24.6px;background:#ececec;border:1.3px solid #bcbcbc;border-top-color:#c4c4c4"></div>
<div style="left:1017px;top:517.8px;width:168px;height:24.6px;background:#ececec;border:1.3px solid #bcbcbc;border-top-color:#c4c4c4"></div>
<div class="t" style="left:1021px;top:517.0px;height:25px;line-height:25px;font-size:19.2px;color:#1d5aa6;">Rögzített számla</div>
<div style="left:1201px;top:517.8px;width:103px;height:24.6px;background:#ececec;border:1.3px solid #bcbcbc;border-top-color:#c4c4c4"></div>
<div class="t" style="left:1204px;top:517.0px;height:25px;line-height:25px;font-size:19.2px;color:#1d5aa6;">Normál</div>
<div class="t" style="left:1322px;top:517.0px;height:25px;line-height:25px;font-size:19.2px;color:#2a2a2a;">Számlaszám:</div>
<div style="left:1451px;top:517.8px;width:133px;height:24.6px;background:#ececec;border:1.3px solid #bcbcbc;border-top-color:#c4c4c4"></div>
<div class="t" style="left:1455px;top:517.0px;height:25px;line-height:25px;font-size:19.2px;color:#1d5aa6;">&nbsp;&nbsp;-&nbsp;&nbsp;/</div>
<div style="left:781px;top:545.4px;width:156px;height:24.6px;background:#f7f7f9;border:1.3px solid #bcbcbc;border-top-color:#c4c4c4"></div>
<div class="t" style="left:783px;top:544.6px;height:25px;line-height:25px;font-size:19.2px;color:#222;letter-spacing:0.360px;">00000027</div>
<svg style="left:896px;top:553.6px;" width="16" height="9" viewBox="0 0 16 9"><path d="M1 1 H15 L8 8.5 Z" fill="#adadad"/></svg>
<svg style="left:923px;top:555.6px;" width="11" height="11" viewBox="0 0 11 11"><path d="M10 1 V10 H1 Z" fill="#adadad"/></svg>
<div style="left:953px;top:545.4px;width:631px;height:24.6px;background:#f7f7f9;border:1.3px solid #bcbcbc;border-top-color:#c4c4c4"></div>
<div class="t" style="left:955.2px;top:544.6px;height:25px;line-height:25px;font-size:19.2px;color:#222;letter-spacing:0.080px;">Belföldi vevő 27- előleges</div>
<svg style="left:1541px;top:553.6px;" width="16" height="9" viewBox="0 0 16 9"><path d="M1 1 H15 L8 8.5 Z" fill="#adadad"/></svg>
<svg style="left:1570px;top:555.6px;" width="11" height="11" viewBox="0 0 11 11"><path d="M10 1 V10 H1 Z" fill="#adadad"/></svg>
<div style="left:781px;top:573.0px;width:393px;height:24.6px;background:#f7f7f9;border:1.3px solid #bcbcbc;border-top-color:#c4c4c4"></div>
<div class="t" style="left:784px;top:572.2px;height:25px;line-height:25px;font-size:19.2px;color:#222;letter-spacing:0.180px;">111111111111111111111111111111 (1)</div>
<svg style="left:1154px;top:581.2px;" width="16" height="9" viewBox="0 0 16 9"><path d="M1 1 H15 L8 8.5 Z" fill="#adadad"/></svg>
<div style="left:781px;top:600.5999999999999px;width:167px;height:24.6px;background:#f7f7f9;border:1.3px solid #bcbcbc;border-top-color:#c4c4c4"></div>
<div class="t" style="left:783px;top:599.8px;height:25px;line-height:25px;font-size:19.2px;color:#222;">Átutalás</div>
<svg style="left:928px;top:608.8px;" width="16" height="9" viewBox="0 0 16 9"><path d="M1 1 H15 L8 8.5 Z" fill="#adadad"/></svg>
<div style="left:781px;top:628.1999999999999px;width:134px;height:24.6px;background:#f7f7f9;border:1.3px solid #bcbcbc;border-top-color:#c4c4c4"></div>
<div class="t" style="left:785px;top:627.4px;height:25px;line-height:25px;font-size:19.2px;color:#222;">&nbsp;&nbsp;-&nbsp;&nbsp;/</div>
<div style="left:781px;top:655.8px;width:134px;height:24.6px;background:#f7f7f9;border:1.3px solid #bcbcbc;border-top-color:#c4c4c4"></div>
<div class="t" style="left:782.5px;top:655.0px;height:25px;line-height:25px;font-size:19.2px;color:#222;letter-spacing:0.500px;">22.07.29</div>
<svg style="left:896px;top:664.0px;" width="16" height="9" viewBox="0 0 16 9"><path d="M1 1 H15 L8 8.5 Z" fill="#adadad"/></svg>
<div style="left:781px;top:683.4px;width:134px;height:24.6px;background:#f7f7f9;border:1.3px solid #bcbcbc;border-top-color:#c4c4c4"></div>
<div class="t" style="left:782.5px;top:682.6px;height:25px;line-height:25px;font-size:19.2px;color:#222;letter-spacing:0.500px;">22.08.10</div>
<svg style="left:896px;top:691.6px;" width="16" height="9" viewBox="0 0 16 9"><path d="M1 1 H15 L8 8.5 Z" fill="#adadad"/></svg>
<div style="left:781px;top:711.0px;width:134px;height:24.6px;background:#f7f7f9;border:1.3px solid #bcbcbc;border-top-color:#c4c4c4"></div>
<div class="t" style="left:785px;top:710.2px;height:25px;line-height:25px;font-size:19.2px;color:#222;">&nbsp;&nbsp;.&nbsp;&nbsp;.</div>
<svg style="left:896px;top:719.2px;" width="16" height="9" viewBox="0 0 16 9"><path d="M1 1 H15 L8 8.5 Z" fill="#adadad"/></svg>
<div style="left:781px;top:738.5999999999999px;width:803px;height:24.6px;background:#f7f7f9;border:1.3px solid #bcbcbc;border-top-color:#c4c4c4"></div>
<svg style="left:1541px;top:746.8px;" width="16" height="9" viewBox="0 0 16 9"><path d="M1 1 H15 L8 8.5 Z" fill="#adadad"/></svg>
<svg style="left:1570px;top:748.8px;" width="11" height="11" viewBox="0 0 11 11"><path d="M10 1 V10 H1 Z" fill="#adadad"/></svg>
<div style="left:781px;top:766.1999999999999px;width:803px;height:24.6px;background:#f7f7f9;border:1.3px solid #bcbcbc;border-top-color:#c4c4c4"></div>
<div style="left:781px;top:793.8px;width:803px;height:24.6px;background:#f7f7f9;border:1.3px solid #bcbcbc;border-top-color:#c4c4c4"></div>
<div style="left:781px;top:821.4px;width:803px;height:24.6px;background:#f7f7f9;border:1.3px solid #bcbcbc;border-top-color:#c4c4c4"></div>
<div class="t" style="left:782.5px;top:820.6px;height:25px;line-height:25px;font-size:19.2px;color:#222;letter-spacing:0.360px;">22-20/00050</div>
<div style="left:781px;top:849.0px;width:167px;height:24.6px;background:#f7f7f9;border:1.3px solid #bcbcbc;border-top-color:#c4c4c4"></div>
<div class="t" style="left:781px;top:848.2px;height:25px;line-height:25px;font-size:19.2px;color:#222;width:145.7px;text-align:right;letter-spacing:0.400px;">1.271.397,-</div>
<div class="clip" style="left:1638.2px;top:474.7px;width:267.1px;height:407.8px;background:#868686;border:1.5px solid #2f66ad;border-left:none">
<div style="left:0px;top:-1.5px;width:6.8px;height:410px;background:#0a50a0"></div>
<div class="t" style="left:16.799999999999955px;top:3.3000000000000114px;height:30px;line-height:30px;font-size:23.3px;color:#fafafa;letter-spacing:0.000px">Válasszon</div>
<div class="t" style="left:39.799999999999955px;top:39.80000000000001px;height:25px;line-height:25px;font-size:19.2px;color:#f4f4f4;letter-spacing:0.020px">Fejléc módosítás</div>
<div class="t" style="left:39.799999999999955px;top:69.75000000000006px;height:25px;line-height:25px;font-size:19.2px;color:#f4f4f4;letter-spacing:-0.285px">Tétel felvétel</div>
<div class="t" style="left:39.799999999999955px;top:99.69999999999999px;height:25px;line-height:25px;font-size:19.2px;color:#f4f4f4;letter-spacing:-0.114px">Tétel módosítás</div>
<div class="t" style="left:39.799999999999955px;top:129.65000000000003px;height:25px;line-height:25px;font-size:19.2px;color:#f4f4f4;letter-spacing:0.079px">Kitöltés rendelésről</div>
<div class="t" style="left:39.799999999999955px;top:159.59999999999997px;height:25px;line-height:25px;font-size:19.2px;color:#f4f4f4;letter-spacing:-0.142px">Kitöltés szállítólevélről</div>
<div class="t" style="left:39.799999999999955px;top:189.55px;height:25px;line-height:25px;font-size:19.2px;color:#f4f4f4;letter-spacing:0.024px">Kitöltés számláról</div>
<div class="t" style="left:39.799999999999955px;top:219.50000000000006px;height:25px;line-height:25px;font-size:19.2px;color:#f4f4f4;letter-spacing:0.050px">Kerekítés</div>
<div class="t" style="left:39.799999999999955px;top:249.45px;height:25px;line-height:25px;font-size:19.2px;color:#f4f4f4;letter-spacing:0.075px">Engedmény</div>
<div style="left:6.8px;top:276.8px;width:260px;height:30px;background:#0a50a0"></div>
<div class="t" style="left:39.799999999999955px;top:279.40000000000003px;height:25px;line-height:25px;font-size:19.2px;color:#f4f4f4;letter-spacing:0.083px">Egyenleg lekérdezés</div>
<div class="t" style="left:39.799999999999955px;top:309.34999999999997px;height:25px;line-height:25px;font-size:19.2px;color:#f4f4f4;letter-spacing:-0.025px">Besorolás</div>
<div class="t" style="left:39.799999999999955px;top:339.3px;height:25px;line-height:25px;font-size:19.2px;color:#f4f4f4;letter-spacing:-0.011px">Dokumentum</div>
<div class="t" style="left:39.799999999999955px;top:369.25000000000006px;height:25px;line-height:25px;font-size:19.2px;color:#f4f4f4;letter-spacing:0.200px">Kommunikáció</div>
<div class="t" style="left:39.799999999999955px;top:397.99999999999994px;height:25px;line-height:25px;font-size:19.2px;color:#f4f4f4;letter-spacing:0.000px">Feladatok</div>
<svg style="left:242.5px;top:6.5px" width="18" height="18" viewBox="0 0 18 18"><path d="M2 2 L16 16 M16 2 L2 16" stroke="#fff" stroke-width="2.4" fill="none"/></svg>
</div>
<div class="clip" style="left:561.8px;top:888.3px;width:1303.2px;height:324px;background:#ececec;border:1.5px solid #3a78bd;border-bottom:none">
<div style="left:-2.3px;top:-1.8px;width:2106px;height:400px">
<div style="left:0.7999999999999545px;top:0px;width:7.6px;height:330px;background:#0a50a0"></div>
<div class="t" style="left:18px;top:5.2000000000000455px;height:30px;line-height:30px;font-size:23.3px;color:#0b4f9c;">Egyenleg lekérdezés</div>
<div style="left:1275px;top:3px;width:24.5px;height:25.5px;background:#f1f1f1"></div>
<svg style="left:1279px;top:8px" width="17" height="17" viewBox="0 0 17 17"><path d="M2 2 L15 15 M15 2 L2 15" stroke="#d23a30" stroke-width="2.2" fill="none"/></svg>
<div style="left:10px;top:39px;width:1263px;height:28px;background:linear-gradient(#cecece,#c2c2c2 40%,#b1b1b1 90%,#b6b6b6)"></div>
<div style="left:10px;top:67px;width:1263px;height:230px;background:#fff"></div>
<div style="left:10px;top:297px;width:1263px;height:28px;background:#c9c9c9"></div>
<div style="left:10px;top:95.25px;width:1263px;height:1px;background:#dcdcdc"></div>
<div style="left:10px;top:124.0px;width:1263px;height:1px;background:#dcdcdc"></div>
<div style="left:10px;top:152.75px;width:1263px;height:1px;background:#dcdcdc"></div>
<div style="left:10px;top:181.5px;width:1263px;height:1px;background:#dcdcdc"></div>
<div style="left:10px;top:210.25px;width:1263px;height:1px;background:#dcdcdc"></div>
<div style="left:10px;top:239.0px;width:1263px;height:1px;background:#dcdcdc"></div>
<div style="left:10px;top:267.75px;width:1263px;height:1px;background:#dcdcdc"></div>
<div style="left:10px;top:66px;width:1263px;height:2px;background:#a9c6e8"></div>
<div style="left:10px;top:67.79999999999995px;width:1263px;height:27.95px;background:linear-gradient(#0852a6,#0d56a8 35%,#2f6eb7 96%,#0a4a94)"></div>
<div style="left:129.10000000000002px;top:39px;width:1px;height:28px;background:#f0f0f0"></div>
<div style="left:129.10000000000002px;top:67px;width:1px;height:230px;background:#dcdcdc"></div>
<div style="left:129.10000000000002px;top:297px;width:1px;height:28px;background:#dedede"></div>
<div style="left:128.89999999999998px;top:67.79999999999995px;width:2px;height:27.95px;background:#a9c6e8"></div>
<div style="left:356.0px;top:39px;width:1px;height:28px;background:#f0f0f0"></div>
<div style="left:356.0px;top:67px;width:1px;height:230px;background:#dcdcdc"></div>
<div style="left:356.0px;top:297px;width:1px;height:28px;background:#dedede"></div>
<div style="left:355.79999999999995px;top:67.79999999999995px;width:2px;height:27.95px;background:#a9c6e8"></div>
<div style="left:582.5px;top:39px;width:1px;height:28px;background:#f0f0f0"></div>
<div style="left:582.5px;top:67px;width:1px;height:230px;background:#dcdcdc"></div>
<div style="left:582.5px;top:297px;width:1px;height:28px;background:#dedede"></div>
<div style="left:582.3px;top:67.79999999999995px;width:2px;height:27.95px;background:#a9c6e8"></div>
<div style="left:668.5px;top:39px;width:1px;height:28px;background:#f0f0f0"></div>
<div style="left:668.5px;top:67px;width:1px;height:230px;background:#dcdcdc"></div>
<div style="left:668.5px;top:297px;width:1px;height:28px;background:#dedede"></div>
<div style="left:668.3px;top:67.79999999999995px;width:2px;height:27.95px;background:#a9c6e8"></div>
<div style="left:755.0px;top:39px;width:1px;height:28px;background:#f0f0f0"></div>
<div style="left:755.0px;top:67px;width:1px;height:230px;background:#dcdcdc"></div>
<div style="left:755.0px;top:297px;width:1px;height:28px;background:#dedede"></div>
<div style="left:754.8px;top:67.79999999999995px;width:2px;height:27.95px;background:#a9c6e8"></div>
<div style="left:927.0px;top:39px;width:1px;height:28px;background:#f0f0f0"></div>
<div style="left:927.0px;top:67px;width:1px;height:230px;background:#dcdcdc"></div>
<div style="left:927.0px;top:297px;width:1px;height:28px;background:#dedede"></div>
<div style="left:926.8px;top:67.79999999999995px;width:2px;height:27.95px;background:#a9c6e8"></div>
<div style="left:1100.0px;top:39px;width:1px;height:28px;background:#f0f0f0"></div>
<div style="left:1100.0px;top:67px;width:1px;height:230px;background:#dcdcdc"></div>
<div style="left:1100.0px;top:297px;width:1px;height:28px;background:#dedede"></div>
<div style="left:1099.8px;top:67.79999999999995px;width:2px;height:27.95px;background:#a9c6e8"></div>
<div class="t" style="left:15px;top:40.0px;height:25px;line-height:25px;font-size:19.2px;color:#333;">Típus</div>
<div class="t" style="left:134.60000000000002px;top:40.0px;height:25px;line-height:25px;font-size:19.2px;color:#333;">Bizszám</div>
<div class="t" style="left:361.5px;top:40.0px;height:25px;line-height:25px;font-size:19.2px;color:#333;">Megjegyzés</div>
<div class="t" style="left:588px;top:40.0px;height:25px;line-height:25px;font-size:19.2px;color:#333;">Kiboc…</div>
<div class="t" style="left:674px;top:40.0px;height:25px;line-height:25px;font-size:19.2px;color:#333;">Esed…</div>
<div class="t" style="left:755.5px;top:40.0px;height:25px;line-height:25px;font-size:19.2px;color:#333;width:165.0px;text-align:right;">Tartozik</div>
<div class="t" style="left:927.5px;top:40.0px;height:25px;line-height:25px;font-size:19.2px;color:#333;width:166.0px;text-align:right;">Követel</div>
<div class="t" style="left:1100.5px;top:40.0px;height:25px;line-height:25px;font-size:19.2px;color:#333;width:165.5px;text-align:right;">Egyenleg</div>
<svg style="left:622px;top:43px" width="9" height="6" viewBox="0 0 9 6"><path d="M0.5 5.5 L4.5 1 L8.5 5.5 Z" fill="#2f69ad"/></svg>
<div class="t" style="left:15px;top:69.07500000000005px;height:25px;line-height:25px;font-size:19.2px;color:#fff;">Pénztár</div>
<div class="t" style="left:134.60000000000002px;top:69.07500000000005px;height:25px;line-height:25px;font-size:19.2px;color:#fff;">01-22/00000001</div>
<div class="t" style="left:587px;top:69.07500000000005px;height:25px;line-height:25px;font-size:19.2px;color:#fff;">22.07.29</div>
<div class="t" style="left:673px;top:69.07500000000005px;height:25px;line-height:25px;font-size:19.2px;color:#fff;">22.07.29</div>
<div class="t" style="left:755.5px;top:69.07500000000005px;height:25px;line-height:25px;font-size:19.2px;color:#fff;width:146.5px;text-align:right;">0,-</div>
<div class="t" style="left:927.5px;top:69.07500000000005px;height:25px;line-height:25px;font-size:19.2px;color:#fff;width:147.5px;text-align:right;">1.271.397,-</div>
<div class="t" style="left:1100.5px;top:69.07500000000005px;height:25px;line-height:25px;font-size:19.2px;color:#fff;width:147.0px;text-align:right;">-1.271.397,-</div>
<div class="t" style="left:15px;top:97.82500000000005px;height:25px;line-height:25px;font-size:19.2px;color:#2c2c2c;">Főszámla</div>
<div class="t" style="left:134.60000000000002px;top:97.82500000000005px;height:25px;line-height:25px;font-size:19.2px;color:#2c2c2c;">22-34/00002</div>
<div class="t" style="left:587px;top:97.82500000000005px;height:25px;line-height:25px;font-size:19.2px;color:#2c2c2c;">22.07.29</div>
<div class="t" style="left:673px;top:97.82500000000005px;height:25px;line-height:25px;font-size:19.2px;color:#2c2c2c;">22.08.10</div>
<div class="t" style="left:755.5px;top:97.82500000000005px;height:25px;line-height:25px;font-size:19.2px;color:#2c2c2c;width:146.5px;text-align:right;">1.271.397,-</div>
<div class="t" style="left:927.5px;top:97.82500000000005px;height:25px;line-height:25px;font-size:19.2px;color:#2c2c2c;width:147.5px;text-align:right;">0,-</div>
<div class="t" style="left:1100.5px;top:97.82500000000005px;height:25px;line-height:25px;font-size:19.2px;color:#2c2c2c;width:147.0px;text-align:right;">0,-</div>
<div class="t" style="left:755.5px;top:299.0px;height:25px;line-height:25px;font-size:19.2px;color:#333;width:146.5px;text-align:right;">1.271.397,-</div>
<div class="t" style="left:927.5px;top:299.0px;height:25px;line-height:25px;font-size:19.2px;color:#333;width:147.5px;text-align:right;">1.271.397,-</div>
<div class="t" style="left:1100.5px;top:299.0px;height:25px;line-height:25px;font-size:19.2px;color:#333;width:147.0px;text-align:right;">0,-</div>
<div style="left:1273px;top:39px;width:29px;height:286px;background:#e7e7e7"></div>
<div style="left:1275px;top:40px;width:25px;height:25px;background:#f0f0f0"></div>
<div style="left:1275px;top:300px;width:25px;height:24px;background:#f0f0f0"></div>
<svg style="left:1277px;top:47px" width="20" height="12" viewBox="0 0 20 12"><path d="M2 10 L10 2.5 L18 10" fill="none" stroke="#c2c2c2" stroke-width="2.2"/></svg>
<svg style="left:1277px;top:306px" width="20" height="12" viewBox="0 0 20 12"><path d="M2 2 L10 9.5 L18 2" fill="none" stroke="#c2c2c2" stroke-width="2.2"/></svg>
</div></div>
<div style="left:41.5px;top:473.3px;width:470px;height:36.4px;border:3.5px solid #e01010;border-radius:2.5px"></div>
<svg style="left:495px;top:476px;" width="54" height="16" viewBox="0 0 54 16"><path d="M0 8 H36" stroke="#e01010" stroke-width="2.6"/><path d="M33 2.8 L52 8 L33 13.2 Z" fill="#e01010"/></svg>
<div style="left:1737.8px;top:160.5px;width:197.5px;height:32px;border:3.5px solid #e01010;border-radius:2.5px"></div>
<svg style="left:1887.5px;top:195px;" width="16" height="276" viewBox="0 0 16 276"><path d="M6.4 0 H9.6 L10.1 258 H5.9 Z" fill="#e01010"/><path d="M3 256.5 L8 273.7 L13 256.5 Z" fill="#e01010"/></svg>
<svg style="left:2005px;top:16px;" width="92" height="92" viewBox="0 0 92 92"><defs><radialGradient id="lg" cx="0.42" cy="0.55" r="0.62"><stop offset="0" stop-color="#f4fafe"/><stop offset="0.55" stop-color="#cfe7f8"/><stop offset="1" stop-color="#a3cff0"/></radialGradient><linearGradient id="hg" x1="0" y1="0" x2="1" y2="0"><stop offset="0" stop-color="#a9cbee"/><stop offset="0.45" stop-color="#79a7dc"/><stop offset="1" stop-color="#5e90cf"/></linearGradient></defs><path d="M50 50.5 L58 58.5" stroke="#8f8f8f" stroke-width="5.5"/><g transform="translate(66.4,69.8) rotate(-45)"><rect x="-7.4" y="-17.5" width="14.8" height="35" rx="4.2" fill="url(#hg)" stroke="#6a98d2" stroke-width="1"/></g><circle cx="33.5" cy="34" r="27.2" fill="#e6e6e6" stroke="#bcbcbc" stroke-width="1.6"/><circle cx="33.5" cy="34" r="22.3" fill="url(#lg)" stroke="#c4c8cc" stroke-width="1.4"/><path d="M33.5 19.5 V48.5 M19 34 H48" stroke="#5f8fc8" stroke-width="7"/></svg>
</div></div>
<div style="left:3px;top:1219px;width:2099.3px;height:68.3px;background:#fff"></div>
<div class="t" style="left:16.5px;top:1235.5px;height:36px;line-height:36px;font-size:27px;color:#7b7b7b;font-family:'DejaVu Sans','Liberation Sans',sans-serif;letter-spacing:-0.3px;-webkit-text-stroke:0.3px #7b7b7b">Kifizetett előlegek lekérdezése</div>
<div style="left:0px;top:1293.5px;width:2106px;height:3px;background:#f4f4f4"></div>
<div style="left:0px;top:1293.5px;width:16px;height:3px;background:#9a9a9a"></div>
<div style="left:215px;top:1293.5px;width:1px;height:3px;background:#aaa"></div>
<div style="left:715px;top:1294px;width:230px;height:2px;background:repeating-linear-gradient(90deg,#8fb2dd 0 5px,#f4f4f4 5px 9px)"></div>
<div style="left:676px;top:1293.5px;width:14px;height:2.5px;background:#a0a0a0"></div>
</body></html>
